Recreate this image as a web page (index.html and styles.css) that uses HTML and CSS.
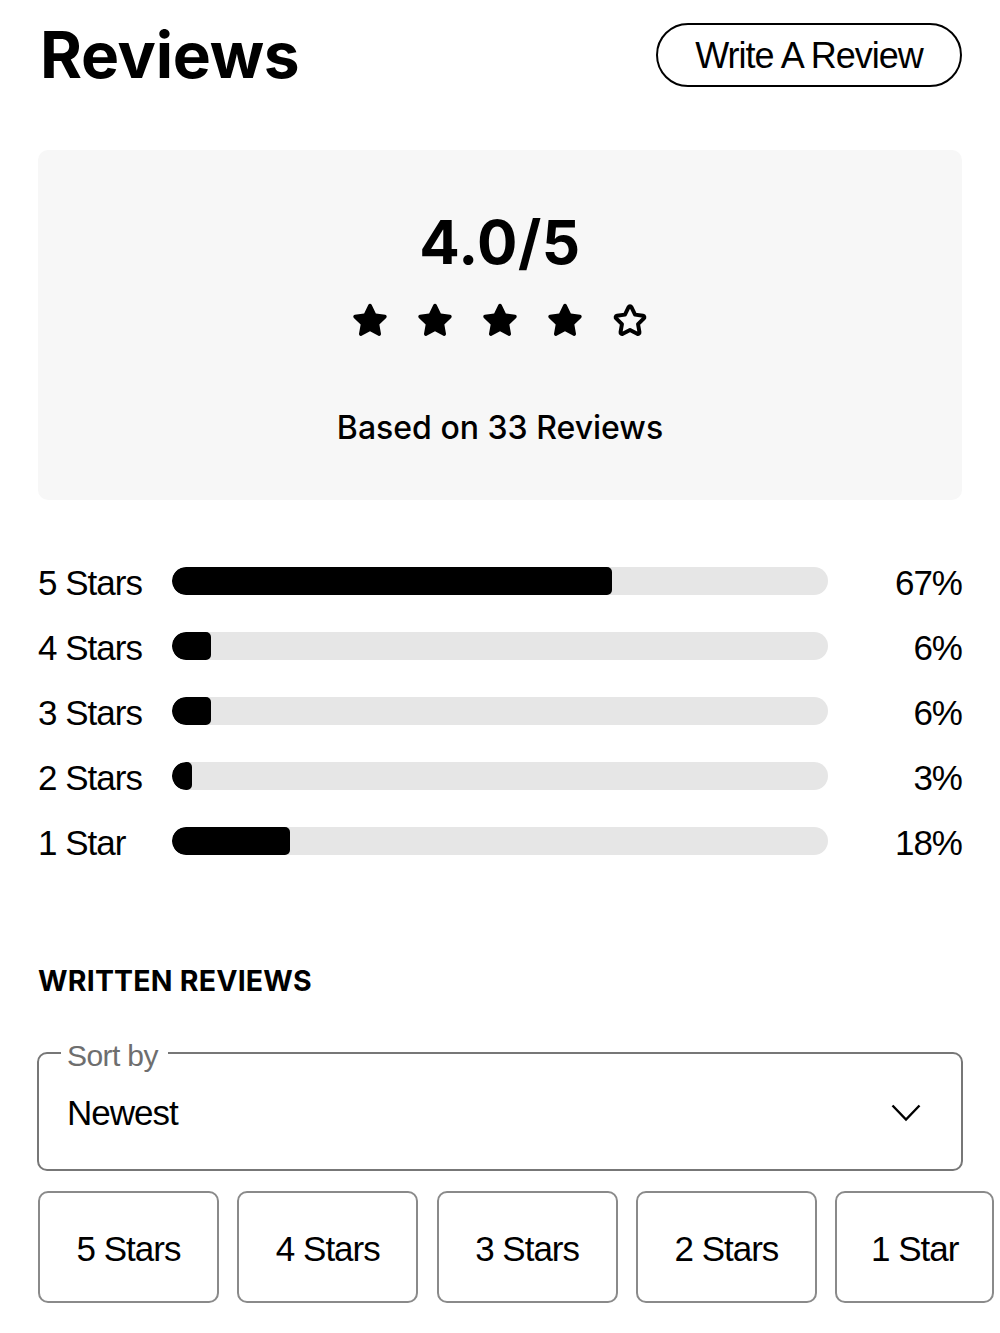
FILE: index.html
```html
<!DOCTYPE html>
<html lang="en">
<head>
<meta charset="utf-8">
<title>Reviews</title>
<link rel="stylesheet" href="styles.css">
</head>
<body>
<main class="reviews">
  <header class="reviews-head">
    <h1 class="reviews-title">Reviews</h1>
    <button class="write-btn" type="button">Write A Review</button>
  </header>

  <section class="summary">
    <div class="summary-score">4.0/5</div>
    <div class="summary-stars">
      <svg class="star" viewBox="0 0 24 24"><path class="star-fill" d="M12 2.6c.4 0 .7.2.9.6l2.3 4.7 5.1.7c.8.1 1.1 1.1.5 1.7l-3.7 3.6.9 5.1c.1.8-.7 1.4-1.4 1l-4.6-2.4-4.6 2.4c-.7.4-1.5-.2-1.4-1l.9-5.1-3.7-3.6c-.6-.6-.3-1.6.5-1.7l5.1-.7 2.3-4.7c.2-.4.5-.6.9-.6z"/></svg>
      <svg class="star" viewBox="0 0 24 24"><path class="star-fill" d="M12 2.6c.4 0 .7.2.9.6l2.3 4.7 5.1.7c.8.1 1.1 1.1.5 1.7l-3.7 3.6.9 5.1c.1.8-.7 1.4-1.4 1l-4.6-2.4-4.6 2.4c-.7.4-1.5-.2-1.4-1l.9-5.1-3.7-3.6c-.6-.6-.3-1.6.5-1.7l5.1-.7 2.3-4.7c.2-.4.5-.6.9-.6z"/></svg>
      <svg class="star" viewBox="0 0 24 24"><path class="star-fill" d="M12 2.6c.4 0 .7.2.9.6l2.3 4.7 5.1.7c.8.1 1.1 1.1.5 1.7l-3.7 3.6.9 5.1c.1.8-.7 1.4-1.4 1l-4.6-2.4-4.6 2.4c-.7.4-1.5-.2-1.4-1l.9-5.1-3.7-3.6c-.6-.6-.3-1.6.5-1.7l5.1-.7 2.3-4.7c.2-.4.5-.6.9-.6z"/></svg>
      <svg class="star" viewBox="0 0 24 24"><path class="star-fill" d="M12 2.6c.4 0 .7.2.9.6l2.3 4.7 5.1.7c.8.1 1.1 1.1.5 1.7l-3.7 3.6.9 5.1c.1.8-.7 1.4-1.4 1l-4.6-2.4-4.6 2.4c-.7.4-1.5-.2-1.4-1l.9-5.1-3.7-3.6c-.6-.6-.3-1.6.5-1.7l5.1-.7 2.3-4.7c.2-.4.5-.6.9-.6z"/></svg>
      <svg class="star" viewBox="0 0 24 24"><path class="star-empty" transform="translate(12 12.4) scale(0.86) translate(-12 -12.4)" d="M12 2.6c.4 0 .7.2.9.6l2.3 4.7 5.1.7c.8.1 1.1 1.1.5 1.7l-3.7 3.6.9 5.1c.1.8-.7 1.4-1.4 1l-4.6-2.4-4.6 2.4c-.7.4-1.5-.2-1.4-1l.9-5.1-3.7-3.6c-.6-.6-.3-1.6.5-1.7l5.1-.7 2.3-4.7c.2-.4.5-.6.9-.6z"/></svg>
    </div>
    <p class="summary-count">Based on 33 Reviews</p>
  </section>

  <section class="breakdown">
    <div class="bar-row">
      <span class="bar-label">5 Stars</span>
      <div class="bar-track"><div class="bar-fill" style="width:67%"></div></div>
      <span class="bar-pct">67%</span>
    </div>
    <div class="bar-row">
      <span class="bar-label">4 Stars</span>
      <div class="bar-track"><div class="bar-fill" style="width:6%"></div></div>
      <span class="bar-pct">6%</span>
    </div>
    <div class="bar-row">
      <span class="bar-label">3 Stars</span>
      <div class="bar-track"><div class="bar-fill" style="width:6%"></div></div>
      <span class="bar-pct">6%</span>
    </div>
    <div class="bar-row">
      <span class="bar-label">2 Stars</span>
      <div class="bar-track"><div class="bar-fill" style="width:3%"></div></div>
      <span class="bar-pct">3%</span>
    </div>
    <div class="bar-row">
      <span class="bar-label">1 Star</span>
      <div class="bar-track"><div class="bar-fill" style="width:18%"></div></div>
      <span class="bar-pct">18%</span>
    </div>
  </section>

  <h2 class="written-title">WRITTEN REVIEWS</h2>

  <fieldset class="sort-box">
    <legend class="sort-legend"><span class="sort-legend-text">Sort by</span></legend>
    <div class="sort-value">
      <span>Newest</span>
      <svg class="chevron" viewBox="0 0 30 18"><path d="M1.5 1.5L15 15.5 28.5 1.5"/></svg>
    </div>
  </fieldset>

  <div class="filters">
    <button class="filter-btn" type="button">5 Stars</button>
    <button class="filter-btn" type="button">4 Stars</button>
    <button class="filter-btn" type="button">3 Stars</button>
    <button class="filter-btn" type="button">2 Stars</button>
    <button class="filter-btn filter-last" type="button">1 Star</button>
  </div>
</main>
</body>
</html>
```

FILE: styles.css
```css
* { box-sizing: border-box; }

html, body {
  margin: 0;
  background: #fff;
  color: #000;
}

body {
  font-family: "Liberation Sans", Arial, sans-serif;
  letter-spacing: -1px;
  overflow: hidden;
}

.reviews {
  padding: 0 38px;
  width: 1000px;
}

/* header */
.reviews-head {
  display: flex;
  justify-content: space-between;
  align-items: center;
  padding-top: 23px;
  height: 87px;
}

.reviews-title {
  margin: 0;
  font-family: Inter, "Liberation Sans", sans-serif;
  font-weight: 700;
  font-size: 64px;
  letter-spacing: -0.3px;
  line-height: 1;
  padding-left: 2px;
}

.write-btn {
  width: 306px;
  height: 64px;
  border: 2px solid #000;
  border-radius: 32px;
  background: #fff;
  font-family: inherit;
  letter-spacing: -1px;
  font-size: 36px;
  color: #000;
  padding: 2px 0 0;
  line-height: 1;
}

/* summary card */
.summary {
  margin-top: 63px;
  height: 350px;
  background: #f7f7f7;
  border-radius: 10px;
  display: flex;
  flex-direction: column;
  align-items: center;
  padding-top: 62px;
}

.summary-score {
  font-family: Inter, "Liberation Sans", sans-serif;
  font-weight: 700;
  font-size: 60px;
  line-height: 60px;
  letter-spacing: 0.5px;
}

.summary-stars {
  display: flex;
  gap: 21px;
  margin-top: 27px;
}

.star {
  width: 44px;
  height: 44px;
  display: block;
}

.star-fill { fill: #000; }

.star-empty {
  fill: none;
  stroke: #000;
  stroke-width: 2.5;
  stroke-linejoin: round;
}

.summary-count {
  margin: 67px 0 0;
  font-family: Inter, "Liberation Sans", sans-serif;
  font-weight: 500;
  font-size: 32px;
  line-height: 36px;
  letter-spacing: 0;
}

/* rating breakdown */
.breakdown {
  margin-top: 67px;
  display: flex;
  flex-direction: column;
  gap: 37px;
}

.bar-row {
  display: flex;
  align-items: center;
  height: 28px;
}

.bar-label {
  width: 134px;
  font-size: 35px;
  line-height: 28px;
  padding-top: 3px;
}

.bar-track {
  width: 656px;
  height: 28px;
  border-radius: 14px;
  background: #e6e6e6;
  overflow: hidden;
}

.bar-fill {
  height: 100%;
  background: #000;
  border-radius: 14px 5px 5px 14px;
}

.bar-pct {
  flex: 1;
  text-align: right;
  font-size: 35px;
  line-height: 28px;
  padding-top: 3px;
}

/* written reviews */
.written-title {
  margin: 110px 0 0;
  font-family: Inter, "Liberation Sans", sans-serif;
  font-weight: 700;
  font-size: 28.5px;
  line-height: 32px;
  letter-spacing: 0.2px;
}

.sort-box {
  margin: 44px 0 0 -1px;
  padding: 0 28px;
  width: 926px;
  height: 130px;
  border: 2px solid #777;
  border-radius: 10px;
  min-width: 0;
}

.sort-legend {
  padding: 0 10px 0 6px;
  margin-left: -6px;
  font-size: 30px;
  letter-spacing: -0.6px;
  line-height: 24px;
  color: #6e6e6e;
}

.sort-legend-text {
  position: relative;
  top: 3px;
}

.sort-value {
  display: flex;
  justify-content: space-between;
  align-items: center;
  height: 102px;
  padding-bottom: 6px;
  font-size: 35px;
}

.chevron {
  width: 30px;
  height: 18px;
  fill: none;
  stroke: #000;
  stroke-width: 2.4;
  margin-right: 12px;
}

/* star filters */
.filters {
  display: flex;
  gap: 18.3px;
  margin-top: 20px;
}

.filter-btn {
  flex: 0 0 181px;
  height: 112px;
  border: 2px solid #8a8a8a;
  border-radius: 10px;
  background: #fff;
  font-family: inherit;
  letter-spacing: -1px;
  font-size: 35px;
  color: #000;
  padding: 4px 0 0;
}

.filter-last {
  flex-basis: 159px;
}
```
